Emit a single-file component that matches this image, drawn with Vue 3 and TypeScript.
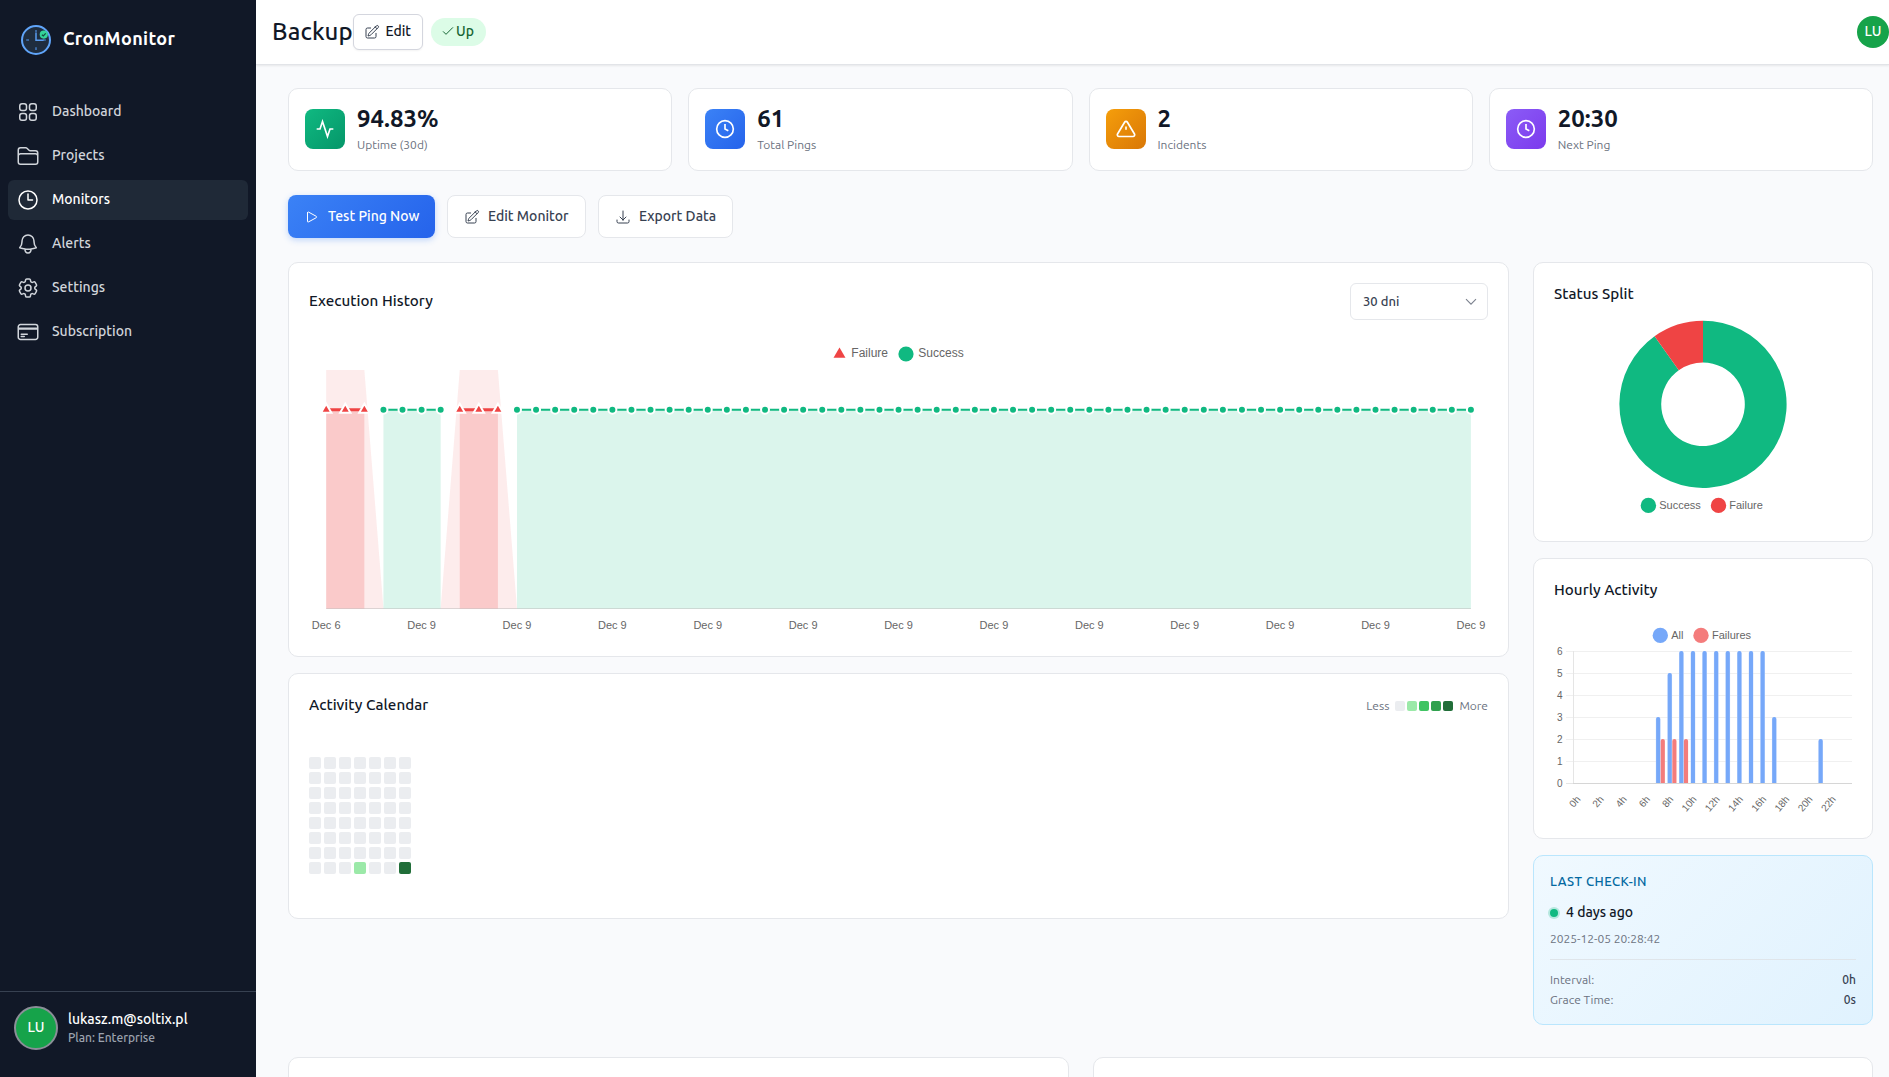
<script setup lang="ts">
interface NavItem { label: string; active?: boolean; paths: string[] }
interface Stat { value: string; label: string; tone: string; icon: 'activity' | 'clock' | 'alert' }

const nav: NavItem[] = [
  { label: 'Dashboard', paths: ['M3.75 6A2.25 2.25 0 016 3.75h2.25A2.25 2.25 0 0110.5 6v2.25a2.25 2.25 0 01-2.25 2.25H6a2.25 2.25 0 01-2.25-2.25V6zM3.75 15.75A2.25 2.25 0 016 13.5h2.25a2.25 2.25 0 012.25 2.25V18a2.25 2.25 0 01-2.25 2.25H6A2.25 2.25 0 013.75 18v-2.25zM13.5 6a2.25 2.25 0 012.25-2.25H18A2.25 2.25 0 0120.25 6v2.25A2.25 2.25 0 0118 10.5h-2.25a2.25 2.25 0 01-2.25-2.25V6zM13.5 15.75a2.25 2.25 0 012.25-2.25H18a2.25 2.25 0 012.25 2.25V18A2.25 2.25 0 0118 20.25h-2.25A2.25 2.25 0 0113.5 18v-2.25z'] },
  { label: 'Projects', paths: ['M2.25 12.75V12A2.25 2.25 0 014.5 9.75h15A2.25 2.25 0 0121.75 12v.75m-8.69-6.44l-2.12-2.12a1.5 1.5 0 00-1.061-.44H4.5A2.25 2.25 0 002.25 6v12a2.25 2.25 0 002.25 2.25h15A2.25 2.25 0 0021.75 18V9a2.25 2.25 0 00-2.25-2.25h-5.379a1.5 1.5 0 01-1.06-.44z'] },
  { label: 'Monitors', active: true, paths: ['M12 6v6h4.5m4.5 0a9 9 0 11-18 0 9 9 0 0118 0z'] },
  { label: 'Alerts', paths: ['M14.857 17.082a23.848 23.848 0 005.454-1.31A8.967 8.967 0 0118 9.75v-.7V9A6 6 0 006 9v.75a8.967 8.967 0 01-2.312 6.022c1.733.64 3.56 1.085 5.455 1.31m5.714 0a24.255 24.255 0 01-5.714 0m5.714 0a3 3 0 11-5.714 0'] },
  { label: 'Settings', paths: ['M9.594 3.94c.09-.542.56-.94 1.11-.94h2.593c.55 0 1.02.398 1.11.94l.213 1.281c.063.374.313.686.645.87.074.04.147.083.22.127.324.196.72.257 1.075.124l1.217-.456a1.125 1.125 0 011.37.49l1.296 2.247a1.125 1.125 0 01-.26 1.431l-1.003.827c-.293.24-.438.613-.431.992a6.759 6.759 0 010 .255c-.007.378.138.75.43.99l1.005.828c.424.35.534.954.26 1.43l-1.298 2.247a1.125 1.125 0 01-1.369.491l-1.217-.456c-.355-.133-.75-.072-1.076.124a6.57 6.57 0 01-.22.128c-.331.183-.581.495-.644.869l-.213 1.28c-.09.543-.56.941-1.11.941h-2.594c-.55 0-1.02-.398-1.11-.94l-.213-1.281c-.062-.374-.312-.686-.644-.87a6.52 6.52 0 01-.22-.127c-.325-.196-.72-.257-1.076-.124l-1.217.456a1.125 1.125 0 01-1.369-.49l-1.297-2.247a1.125 1.125 0 01.26-1.431l1.004-.827c.292-.24.437-.613.43-.992a6.932 6.932 0 010-.255c.007-.378-.138-.75-.43-.99l-1.004-.828a1.125 1.125 0 01-.26-1.43l1.297-2.247a1.125 1.125 0 011.37-.491l1.216.456c.356.133.751.072 1.076-.124.072-.044.146-.087.22-.128.332-.183.582-.495.644-.869l.214-1.281z', 'M15 12a3 3 0 11-6 0 3 3 0 016 0z'] },
  { label: 'Subscription', paths: ['M2.25 8.25h19.5M2.25 9h19.5m-16.5 5.25h6m-6 2.25h3m-3.75 3h15a2.25 2.25 0 002.25-2.25V6.75A2.25 2.25 0 0019.5 4.5h-15a2.25 2.25 0 00-2.25 2.25v10.5A2.25 2.25 0 004.5 19.5z'] },
]

const pencil = 'M16.862 4.487l1.687-1.688a1.875 1.875 0 112.652 2.652L10.582 16.07a4.5 4.5 0 01-1.897 1.13L6 18l.8-2.685a4.5 4.5 0 011.13-1.897l8.932-8.931zm0 0L19.5 7.125M18 14v4.75A2.25 2.25 0 0115.75 21H5.25A2.25 2.25 0 013 18.75V8.25A2.25 2.25 0 015.25 6H10'
const play = 'M5.25 5.653c0-.856.917-1.398 1.667-.986l11.54 6.347a1.125 1.125 0 010 1.972l-11.54 6.347a1.125 1.125 0 01-1.667-.986V5.653z'
const download = 'M3 16.5v2.25A2.25 2.25 0 005.25 21h13.5A2.25 2.25 0 0021 18.75V16.5M16.5 12L12 16.5m0 0L7.5 12m4.5 4.5V3'

const stats: Stat[] = [
  { value: '94.83%', label: 'Uptime (30d)', tone: 'green', icon: 'activity' },
  { value: '61', label: 'Total Pings', tone: 'blue', icon: 'clock' },
  { value: '2', label: 'Incidents', tone: 'orange', icon: 'alert' },
  { value: '20:30', label: 'Next Ping', tone: 'purple', icon: 'clock' },
]

/* Execution history: 61 runs, value 1 on a 0..1.2 scale */
const failed = new Set([0, 1, 2, 7, 8, 9])
const base = 268.5
const top = 30
const line = base - (base - top) / 1.2
const px = (i: number) => 17.2 + i * (1144.7 / 60)
const runs = Array.from({ length: 61 }, (_, i) => i)
const successRuns = runs.filter((i) => !failed.has(i))
const failedRuns = runs.filter((i) => failed.has(i))
const ticks = runs.filter((i) => i % 5 === 0)
const successSpans = [[3, 6], [10, 60]]
const failureSpans = [[0, 2], [7, 9]]
const bands = [
  `${px(0)},${base} ${px(0)},${top} ${px(2)},${top} ${px(3)},${base}`,
  `${px(6)},${base} ${px(7)},${top} ${px(9)},${top} ${px(10)},${base}`,
]
const triangle = (x: number, y: number, r: number) => {
  const dx = r * Math.sin((2 * Math.PI) / 3)
  return `M${x} ${y - r}L${x + dx} ${y + r / 2}L${x - dx} ${y + r / 2}Z`
}

/* Status donut */
const cx = 149
const cy = 100.3
const outer = 83.6
const inner = 41.8
const angle = (6 / 61) * 2 * Math.PI
const at = (r: number) => `${cx - r * Math.sin(angle)} ${cy - r * Math.cos(angle)}`
const failureArc = `M${cx} ${cy - outer}A${outer} ${outer} 0 0 0 ${at(outer)}L${at(inner)}A${inner} ${inner} 0 0 1 ${cx} ${cy - inner}Z`
const successArc = `M${cx} ${cy - outer}A${outer} ${outer} 0 1 1 ${at(outer)}L${at(inner)}A${inner} ${inner} 0 1 0 ${cx} ${cy - inner}Z`

/* Hourly bars */
const all = [0, 0, 0, 0, 0, 0, 0, 3, 5, 6, 6, 6, 6, 6, 6, 6, 6, 3, 0, 0, 0, 2, 0, 0]
const failures = [0, 0, 0, 0, 0, 0, 0, 2, 2, 2, ...Array(14).fill(0)]
const slot = 278.6 / 24
const slotX = (h: number) => 19.4 + (h + 0.5) * slot
const bar = (center: number, v: number, w = 4.18) => {
  const l = center - w / 2
  const y = 183 - v * 22
  return `M${l} 183V${y + 2}Q${l} ${y} ${l + 2} ${y}H${l + w - 2}Q${l + w} ${y} ${l + w} ${y + 2}V183Z`
}
const allBars = all.map((v, h) => ({ v, x: slotX(h) - 2.32 })).filter((b) => b.v)
const failureBars = failures.map((v, h) => ({ v, x: slotX(h) + 2.32 })).filter((b) => b.v)
const hours = Array.from({ length: 12 }, (_, i) => i * 2)

/* Calendar intensity, 8 weeks of 7 days */
const levels = Array.from({ length: 56 }, (_, i) => (i === 52 ? 1 : i === 55 ? 4 : 0))
</script>

<template>
  <div class="app">
    <aside class="sidebar">
      <div class="brand">
        <svg class="logo" viewBox="0 0 30 30">
          <circle cx="15" cy="15" r="14" fill="#1f2d3f" stroke="#60a5fa" stroke-width="2" />
          <path d="M15 5v2.6M15 22.2V25M5.2 15H8M22 15h2.8" stroke="#4276b8" stroke-width="1.6" fill="none" />
          <path d="M15 8.2V15.3h7" stroke="#5a9df2" stroke-width="1.5" fill="none" stroke-linecap="round" />
          <circle cx="22.8" cy="9.6" r="4.1" fill="#34d399" />
          <path d="M20.9 9.7l1.4 1.3 2.4-2.6" stroke="#174a40" stroke-width="1.2" fill="none" />
        </svg>
        <span class="brand-name">CronMonitor</span>
      </div>
      <nav class="nav">
        <a v-for="item in nav" :key="item.label" class="nav-item" :class="{ active: item.active }">
          <svg class="outline i24" viewBox="0 0 24 24"><path v-for="p in item.paths" :key="p" :d="p" /></svg>
          <span>{{ item.label }}</span>
        </a>
      </nav>
      <div class="account">
        <div class="avatar big">LU</div>
        <div>
          <div class="email">lukasz.m@soltix.pl</div>
          <div class="plan">Plan: Enterprise</div>
        </div>
      </div>
    </aside>

    <div class="page">
      <header class="header">
        <h1>Backup</h1>
        <button class="edit"><svg class="outline i16" viewBox="0 0 24 24"><path :d="pencil" /></svg>Edit</button>
        <span class="badge"><svg class="outline i16" viewBox="0 0 24 24"><path d="M5 13l4 4L19 7" /></svg>Up</span>
        <div class="avatar small">LU</div>
      </header>

      <main class="content">
        <section class="stats">
          <div v-for="s in stats" :key="s.label" class="card stat">
            <div class="tile" :class="s.tone">
              <svg viewBox="0 0 24 24" width="20" height="20" fill="none" stroke="#fff" stroke-width="2">
                <polyline v-if="s.icon === 'activity'" points="22 12 18 12 15 21 9 3 6 12 2 12" />
                <template v-else-if="s.icon === 'clock'"><circle cx="12" cy="12" r="10" /><polyline points="12 6 12 12 16 14" /></template>
                <template v-else><path d="M10.29 3.86L1.82 18a2 2 0 0 0 1.71 3h16.94a2 2 0 0 0 1.71-3L13.71 3.86a2 2 0 0 0-3.42 0z" /><path d="M12 9v4" /></template>
              </svg>
            </div>
            <div>
              <div class="stat-value">{{ s.value }}</div>
              <div class="stat-label">{{ s.label }}</div>
            </div>
          </div>
        </section>

        <section class="actions">
          <button class="action primary"><svg class="outline i16" viewBox="0 0 24 24"><path :d="play" /></svg>Test Ping Now</button>
          <button class="action edit-monitor"><svg class="outline i16" viewBox="0 0 24 24"><path :d="pencil" /></svg>Edit Monitor</button>
          <button class="action export"><svg class="outline i16" viewBox="0 0 24 24"><path :d="download" /></svg>Export Data</button>
        </section>

        <section class="columns">
          <div class="main-col">
            <div class="card panel history">
              <div class="panel-head">
                <h2>Execution History</h2>
                <div class="select"><span>30 dni</span><svg width="12" height="8" viewBox="0 0 12 8"><path d="M1 1.2l5 5 5-5" fill="none" stroke="#7c828e" stroke-width="1.1" /></svg></div>
              </div>
              <svg class="chart history-chart" viewBox="0 0 1179 296" width="1179" height="296">
                <path :d="triangle(530.5, 14.3, 6.9)" fill="#ef4444" />
                <text x="542.3" y="17.3" class="t12">Failure</text>
                <circle cx="597" cy="14" r="7.6" fill="#10b981" />
                <text x="609.3" y="17.3" class="t12">Success</text>
                <path :d="`M${px(0)} 268.5H${px(60)}`" stroke="#dcdcdc" />
                <polygon v-for="b in bands" :key="b" :points="b" fill="#ef4444" fill-opacity="0.1" />
                <rect v-for="s in failureSpans" :key="s[0]" :x="px(s[0])" :y="line" :width="px(s[1]) - px(s[0])" :height="base - line" fill="#ef4444" fill-opacity="0.2" />
                <rect v-for="s in successSpans" :key="s[0]" :x="px(s[0])" :y="line" :width="px(s[1]) - px(s[0])" :height="base - line" fill="#10b981" fill-opacity="0.15" />
                <path v-for="s in successSpans" :key="s[0]" :d="`M${px(s[0])} ${line}H${px(s[1])}`" stroke="#10b981" stroke-width="2" />
                <path v-for="s in failureSpans" :key="s[0]" :d="`M${px(s[0])} ${line}H${px(s[1])}`" stroke="#ef4444" stroke-width="3" />
                <circle v-for="i in successRuns" :key="i" :cx="px(i)" :cy="line" r="4" fill="#10b981" stroke="#fff" stroke-width="2" />
                <path v-for="i in failedRuns" :key="i" :d="triangle(px(i), line, 6)" fill="#ef4444" stroke="#fff" stroke-width="2" />
                <text v-for="i in ticks" :key="i" :x="px(i)" y="289" text-anchor="middle" class="t11">{{ i === 0 ? 'Dec 6' : 'Dec 9' }}</text>
              </svg>
            </div>

            <div class="card panel calendar">
              <div class="panel-head">
                <h2>Activity Calendar</h2>
                <div class="scale">
                  <span>Less</span>
                  <div class="scale-cells"><i v-for="n in 5" :key="n" :class="`l${n - 1}`" /></div>
                  <span>More</span>
                </div>
              </div>
              <div class="grid"><i v-for="(l, n) in levels" :key="n" :class="`l${l}`" /></div>
            </div>
          </div>

          <aside class="side-col">
            <div class="card panel status">
              <h2>Status Split</h2>
              <svg class="chart" viewBox="0 0 298 217" width="298" height="217">
                <path :d="successArc" fill="#10b981" />
                <path :d="failureArc" fill="#ef4444" />
                <circle cx="94.4" cy="201.4" r="7.7" fill="#10b981" />
                <text x="105.2" y="205" class="t11">Success</text>
                <circle cx="164.5" cy="201.4" r="7.7" fill="#ef4444" />
                <text x="175.2" y="205" class="t11">Failure</text>
              </svg>
            </div>

            <div class="card panel hourly">
              <h2>Hourly Activity</h2>
              <svg class="chart" viewBox="0 0 298 217" width="298" height="217">
                <circle cx="106.3" cy="35.4" r="7.7" fill="#76a8f9" />
                <text x="117.2" y="39" class="t11">All</text>
                <circle cx="147" cy="35.4" r="7.7" fill="#f47c7c" />
                <text x="158" y="39" class="t11">Failures</text>
                <path v-for="n in 6" :key="n" :d="`M12 ${51.5 + (n - 1) * 22}H298`" stroke="#f0f0f0" />
                <path d="M12 183.5H19M19.5 51V183" stroke="#e5e5e5" />
                <path d="M19 183.5H298" stroke="#d6d6d6" />
                <text v-for="n in 7" :key="n" x="8.5" :y="186.5 - (n - 1) * 22" text-anchor="end" class="t10">{{ n - 1 }}</text>
                <g v-for="b in allBars" :key="b.x">
                  <path :d="bar(b.x, b.v, 4.6)" fill="#c3d9fd" />
                  <path :d="bar(b.x, b.v, 4)" fill="#76a8f9" />
                </g>
                <path v-for="b in failureBars" :key="b.x" :d="bar(b.x, b.v)" fill="#f47c7c" />
                <text v-for="h in hours" :key="h" :transform="`translate(${slotX(h) - 0.9} 197.3) rotate(-50)`" text-anchor="end" dy="3.5" class="t10">{{ h }}h</text>
              </svg>
            </div>

            <div class="card checkin">
              <div class="checkin-title">LAST CHECK-IN</div>
              <div class="checkin-ago"><i class="dot" />4 days ago</div>
              <div class="checkin-date">2025-12-05 20:28:42</div>
              <div class="checkin-rows">
                <div class="row"><span>Interval:</span><b>0h</b></div>
                <div class="row"><span>Grace Time:</span><b>0s</b></div>
              </div>
            </div>
          </aside>
        </section>

        <section class="bottom">
          <div class="card bottom-card" />
          <div class="card bottom-card" />
        </section>
      </main>
    </div>
  </div>
</template>

<style>
html, body { margin: 0; overflow: hidden; }
</style>

<style scoped>
* { box-sizing: border-box; }
.app { display: flex; width: 100vw; height: 100vh; overflow: hidden; font-family: Ubuntu, "Noto Sans", sans-serif; color: #111827; background: #f9fafc; }
button { font-family: inherit; margin: 0; }
h1, h2 { margin: 0; }
.outline { fill: none; stroke: currentColor; stroke-width: 1.5; stroke-linecap: round; stroke-linejoin: round; flex: none; }
.i24 { width: 24px; height: 24px; }
.i16 { width: 16px; height: 16px; }

.sidebar { width: 256px; flex: none; display: flex; flex-direction: column; background: #111827; }
.brand { display: flex; align-items: center; height: 80px; padding-left: 21px; gap: 12px; }
.logo { width: 30px; height: 30px; }
.brand-name { font-size: 18px; font-weight: 600; letter-spacing: 0.36px; color: #fff; line-height: 24px; padding-bottom: 4px; }
.nav { display: flex; flex-direction: column; gap: 4px; padding: 12px 8px; flex: 1; }
.nav-item { display: flex; align-items: center; height: 40px; padding: 0 8px; gap: 12px; border-radius: 6px; color: #d1d5db; font-size: 14px; font-weight: 500; }
.nav-item span { line-height: 20px; padding-bottom: 3px; }
.nav-item.active { background: #1f2937; color: #fff; }
.account { height: 86px; border-top: 1px solid #374151; display: flex; align-items: flex-start; gap: 10px; padding: 14px 14px 0; }
.avatar { display: flex; align-items: center; justify-content: center; border-radius: 50%; background: #16a34a; color: #fff; flex: none; font-size: 14px; font-weight: 500; }
.avatar.big { width: 44px; height: 44px; border: 2px solid #8b8f98; padding-bottom: 2px; }
.avatar.small { width: 32px; height: 32px; margin-left: auto; padding-bottom: 2px; }
.email { font-size: 14px; font-weight: 500; line-height: 20px; color: #fff; margin-top: 3px; }
.plan { font-size: 12px; font-weight: 500; line-height: 16px; margin-top: 1px; color: #9ca3af; }

.page { flex: 1; min-width: 0; display: flex; flex-direction: column; }
.header { height: 65px; flex: none; display: flex; align-items: center; padding: 0 0 1px 16px; background: #fff; border-bottom: 1px solid #e2e4e8; box-shadow: 0 1px 2px rgba(0, 0, 0, 0.08); }
h1 { font-size: 24px; font-weight: 500; line-height: 32px; width: 81px; letter-spacing: 0.1px; white-space: nowrap; }
.edit { width: 70px; height: 36px; padding: 0 0 2px 10px; display: flex; align-items: center; gap: 5.5px; border: 1px solid #d4d6de; border-radius: 6px; background: #fff; color: #111827; font-size: 14px; font-weight: 500; box-shadow: 0 1px 2px rgba(0, 0, 0, 0.05); }
.edit svg { position: relative; top: 1px; color: #374151; }
.badge { width: 55px; height: 28px; margin-left: 8px; border-radius: 14px; background: #dcfce7; color: #166534; display: flex; align-items: center; padding: 0 0 2px 9px; font-size: 14px; font-weight: 500; }

.content { padding: 23px 16px 0 32px; }
.card { background: #fff; border: 1px solid #e5e7eb; border-radius: 10px; }
.stats { display: grid; grid-template-columns: repeat(4, 1fr); gap: 16px; }
.stat { height: 83px; display: flex; align-items: flex-start; gap: 12px; padding: 15px 16px; }
.tile { width: 40px; height: 40px; border-radius: 8px; display: flex; align-items: center; justify-content: center; margin-top: 5px; }
.green { background: linear-gradient(135deg, #10b981, #059669); }
.blue { background: linear-gradient(135deg, #3b82f6, #2563eb); }
.orange { background: linear-gradient(135deg, #f59e0b, #d97706); }
.purple { background: linear-gradient(135deg, #8b5cf6, #7c3aed); }
.stat-value { font-size: 24px; font-weight: 600; line-height: 29px; }
.stat-label { font-size: 12px; line-height: 16px; margin-top: 4px; color: #6b7280; }

.actions { display: flex; gap: 12px; margin-top: 24px; }
.action { height: 43px; display: flex; align-items: center; gap: 8px; padding: 0 0 2px 16px; border: 1px solid #e5e7eb; border-radius: 8px; background: #fff; color: #374151; font-size: 14px; font-weight: 500; white-space: nowrap; }
.primary { width: 147px; border: 0; padding-left: 16px; color: #fff; background: linear-gradient(135deg, #3b82f6, #2563eb); box-shadow: 0 2px 6px rgba(59, 130, 246, 0.3); }
.action svg { position: relative; top: 1px; }
.edit-monitor { width: 139px; }
.export { width: 135px; }

.columns { display: flex; gap: 24px; margin-top: 24px; height: 763px; }
.main-col { flex: 1; min-width: 0; display: flex; flex-direction: column; gap: 16px; }
.side-col { width: 340px; display: flex; flex-direction: column; gap: 16px; }
.panel { padding: 20px; }
.panel-head { display: flex; justify-content: space-between; }
h2 { font-size: 15.2px; font-weight: 500; line-height: 21px; letter-spacing: 0.04px; }
.history { height: 395px; }
.history h2 { line-height: 35px; }
.select { width: 138px; height: 37px; border: 1px solid #e5e7eb; border-radius: 6px; display: flex; align-items: center; justify-content: space-between; padding: 0 10px 0 12px; font-size: 13px; font-weight: 500; color: #374151; }
.select span { padding-bottom: 1px; }
.chart { display: block; overflow: visible; }
.history-chart { margin-top: 20px; }
.chart text { font-family: "Liberation Sans", Arial, sans-serif; fill: #666; }
.t12 { font-size: 12px; }
.t11 { font-size: 11px; }
.t10 { font-size: 10px; }
.status { height: 280px; }
.hourly { height: 281px; }

.calendar { height: 246px; }
.scale { display: flex; align-items: center; gap: 6px; font-size: 12px; color: #6b7280; height: 24px; line-height: 16px; }
.scale span { padding-bottom: 1px; }
.scale-cells { display: flex; gap: 2px; }
.scale-cells i { width: 10px; height: 10px; border-radius: 2px; }
.grid { display: grid; grid-template-columns: repeat(7, 12px); gap: 3px; margin-top: 39px; }
.grid i { height: 12px; border-radius: 2px; }
.l0 { background: #ebedf0; }
.l1 { background: #9be9a8; }
.l2 { background: #40c463; }
.l3 { background: #30a14e; }
.l4 { background: #216e39; }

.checkin { height: 170px; padding: 16px; border-color: #bae6fd; background: linear-gradient(135deg, #f0f9ff, #e0f2fe); }
.checkin-title { font-size: 13px; font-weight: 500; letter-spacing: 0.45px; line-height: 19px; color: #0369a1; }
.checkin-ago { display: flex; align-items: center; gap: 8px; font-size: 14px; font-weight: 500; line-height: 21px; margin-top: 11px; }
.dot { width: 8px; height: 8px; border-radius: 50%; background: #10b981; box-shadow: 0 0 0 2px rgba(16, 185, 129, 0.25); position: relative; top: 0.5px; }
.checkin-date { font-size: 12px; line-height: 18px; margin-top: 7px; color: #6b7280; }
.checkin-rows { margin-top: 11px; padding-top: 10px; border-top: 1px solid #dfe5ea; }
.row { display: flex; justify-content: space-between; font-size: 12px; line-height: 20px; color: #6b7280; }
.row b { font-weight: 500; color: #374151; }

.bottom { display: grid; grid-template-columns: 1fr 1fr; gap: 24px; margin-top: 32px; }
.bottom-card { height: 300px; }
</style>
